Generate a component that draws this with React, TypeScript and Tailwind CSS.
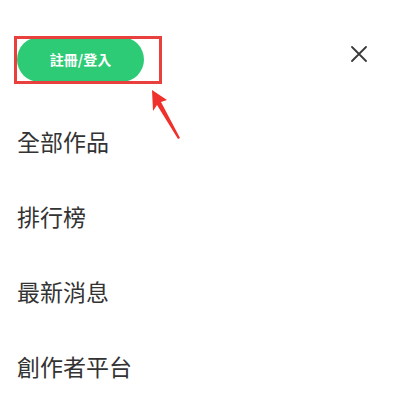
export default function App() {
  const items = ['全部作品', '排行榜', '最新消息', '創作者平台'];

  return (
    <div
      className="relative h-[395px] w-[393px] bg-white"
      style={{ fontFamily: '"Noto Sans CJK TC", "Noto Sans", sans-serif' }}
    >
      <div className="flex items-start justify-between pl-[17px] pr-[26px] pt-[37px]">
        <button className="flex h-[45px] w-[127px] items-center justify-center rounded-full bg-[#2ecb77] text-[14px] font-bold text-white">
          註冊/登入
        </button>
        <svg className="mt-[9px]" width="16" height="16" viewBox="0 0 16 16" fill="none">
          <path d="M1 1L15 15M15 1L1 15" stroke="#3a3a3a" strokeWidth="1.8" strokeLinecap="round" />
        </svg>
      </div>

      <ul className="mt-[22px] pl-[17px]">
        {items.map((item) => (
          <li key={item} className="flex h-[75px] items-center text-[23px] text-[#333]">
            {item}
          </li>
        ))}
      </ul>

      {/* annotation */}
      <div className="pointer-events-none absolute left-[14px] top-[36px] h-[48px] w-[148px] border-[3px] border-[#e8403c]" />
      <svg className="pointer-events-none absolute left-[140px] top-[85px]" width="50" height="60" viewBox="0 0 50 60">
        <polygon points="12,5 27,15 21,17 40,53 38,54 17,20 13,26" fill="#f0302c" />
      </svg>
    </div>
  );
}
